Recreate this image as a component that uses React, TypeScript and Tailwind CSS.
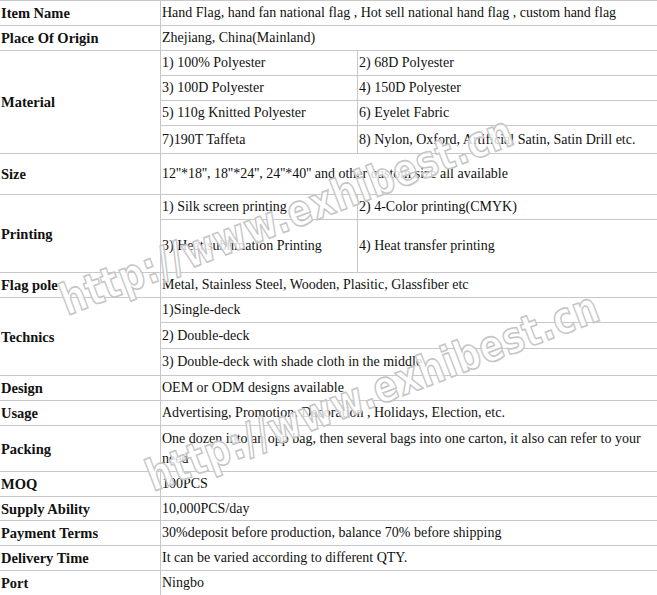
import type { ReactNode } from 'react'

const line = 'border-[#c8c8c8]'

function Label({ children, span = '' }: { children: ReactNode; span?: string }) {
  return (
    <div className={`col-start-1 flex items-center border-b border-r ${line} pl-[1px] text-[14.5px] font-bold ${span}`}>
      {children}
    </div>
  )
}

function Value({ children, wide = false }: { children: ReactNode; wide?: boolean }) {
  return (
    <div
      className={`flex items-center border-b ${line} pl-[1px] ${
        wide ? 'col-span-2' : ''
      }`}
    >
      {children}
    </div>
  )
}

function Half({ children, left = false }: { children: ReactNode; left?: boolean }) {
  return (
    <div className={`flex items-center border-b ${line} pl-[1px] ${left ? 'border-r' : ''}`}>
      {children}
    </div>
  )
}

// diagonal outlined site watermark that sits over the table
function Watermark({ x, y }: { x: number; y: number }) {
  return (
    <div
      className="pointer-events-none absolute whitespace-nowrap text-[35px] font-bold leading-none tracking-[1px] text-white/80 [-webkit-text-stroke:1.3px_#c6c6c6]"
      style={{
        left: x,
        top: y,
        transform: 'translate(-50%, -50%) rotate(-21deg) scaleY(1.25)',
        fontFamily: '"DejaVu Sans", sans-serif',
      }}
    >
      http://www.exhibest.cn
    </div>
  )
}

export default function App() {
  return (
    <div
      className="relative h-[595px] w-[657px] overflow-hidden bg-white text-[14px] leading-[20px] text-[#111]"
      style={{ fontFamily: '"Liberation Serif", "Times New Roman", serif' }}
    >
      <div
        className={`grid grid-cols-[161px_197px_1fr] grid-rows-[25px_25px_25px_25px_25px_28px_41px_25px_53px_25px_25px_26px_27px_25px_25px_46px_25px_24px_25px_25px_25px] border-t ${line}`}
      >
        <Label>Item Name</Label>
        <Value wide>Hand Flag, hand fan national flag , Hot sell national hand flag , custom hand flag</Value>

        <Label>Place Of Origin</Label>
        <Value wide>Zhejiang, China(Mainland)</Value>

        <Label span="row-span-4">Material</Label>
        <Half left>1) 100% Polyester</Half>
        <Half>2) 68D Polyester</Half>
        <Half left>3) 100D Polyester</Half>
        <Half>4) 150D Polyester</Half>
        <Half left>5) 110g Knitted Polyester</Half>
        <Half>6) Eyelet Fabric</Half>
        <Half left>7)190T Taffeta</Half>
        <Half>8) Nylon, Oxford, Artificial Satin, Satin Drill etc.</Half>

        <Label>Size</Label>
        <Value wide>12''*18'', 18''*24'', 24''*40'' and other custom size all available</Value>

        <Label span="row-span-2">Printing</Label>
        <Half left>1) Silk screen printing</Half>
        <Half>2) 4-Color printing(CMYK)</Half>
        <Half left>3) Heat sublimation Printing</Half>
        <Half>4) Heat transfer printing</Half>

        <Label>Flag pole</Label>
        <Value wide>Metal, Stainless Steel, Wooden, Plasitic, Glassfiber etc</Value>

        <Label span="row-span-3">Technics</Label>
        <Value wide>1)Single-deck</Value>
        <Value wide>2) Double-deck</Value>
        <Value wide>3) Double-deck with shade cloth in the middle</Value>

        <Label>Design</Label>
        <Value wide>OEM or ODM designs available</Value>

        <Label>Usage</Label>
        <Value wide>Advertising, Promotion, Decoration , Holidays, Election, etc.</Value>

        <Label>Packing</Label>
        <Value wide>
          One dozen into an opp bag, then several bags into one carton, it also can refer to your need
        </Value>

        <Label>MOQ</Label>
        <Value wide>100PCS</Value>

        <Label>Supply Ability</Label>
        <Value wide>10,000PCS/day</Value>

        <Label>Payment Terms</Label>
        <Value wide>30%deposit before production, balance 70% before shipping</Value>

        <Label>Delivery Time</Label>
        <Value wide>It can be varied according to different QTY.</Value>

        <Label>Port</Label>
        <Value wide>Ningbo</Value>
      </div>

      <Watermark x={287} y={216} />
      <Watermark x={373} y={392} />
    </div>
  )
}
